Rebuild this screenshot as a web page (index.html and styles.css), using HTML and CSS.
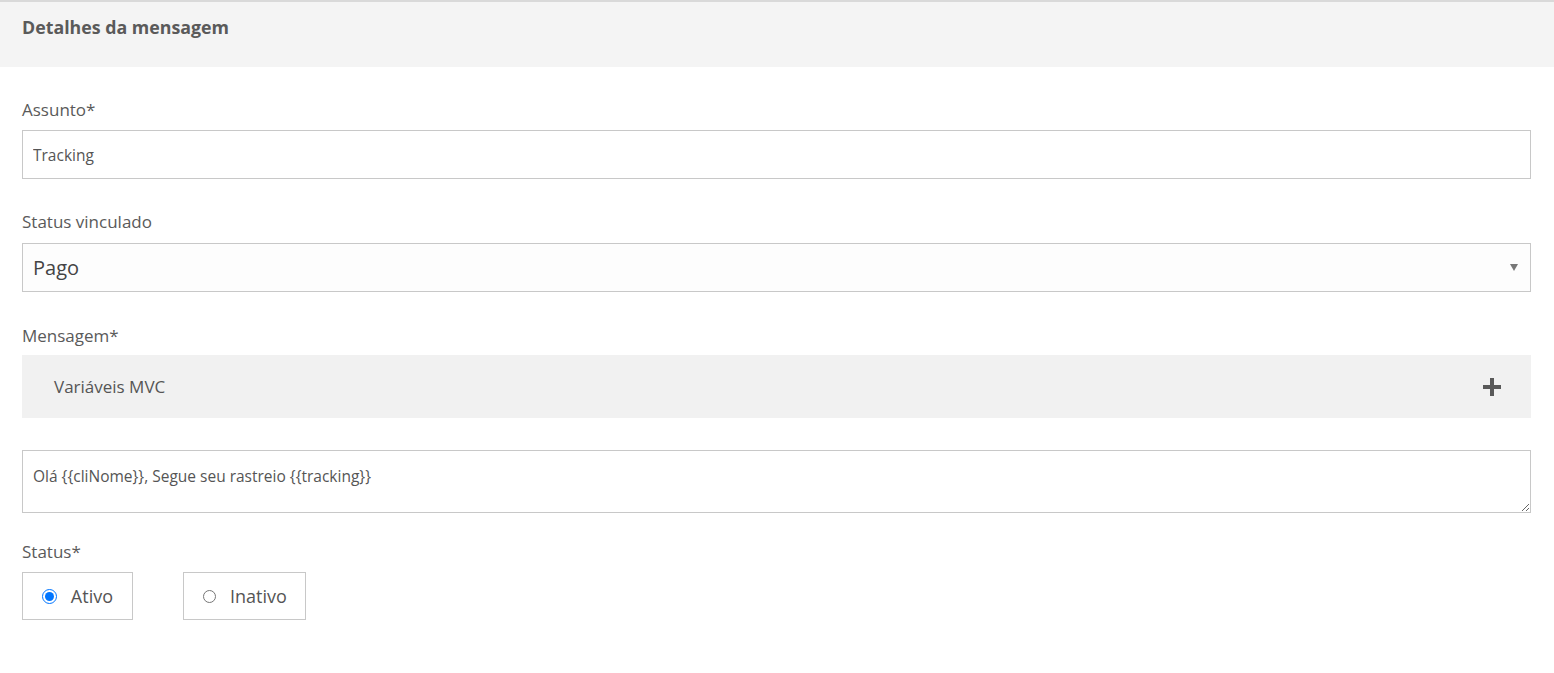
FILE: index.html
```html
<!DOCTYPE html>
<html lang="pt">
<head>
<meta charset="utf-8">
<title>Detalhes da mensagem</title>
<link rel="stylesheet" href="styles.css">
</head>
<body>
<div class="panel">
  <div class="panel-header">Detalhes da mensagem</div>
  <div class="panel-body">
    <div class="group g-subject">
      <label class="label">Assunto*</label>
      <input class="field" type="text" value="Tracking">
    </div>
    <div class="group g-status-link">
      <label class="label">Status vinculado</label>
      <div class="select">
        <span class="select-value">Pago</span>
        <span class="select-arrow"></span>
      </div>
    </div>
    <div class="group g-message">
      <label class="label label-msg">Mensagem*</label>
      <div class="accordion">
        <span class="accordion-title">Variáveis MVC</span>
        <svg class="plus" width="18" height="18" viewBox="0 0 18 18"><rect x="0" y="7" width="18" height="4" fill="#595959"/><rect x="7" y="0" width="4" height="18" fill="#595959"/></svg>
      </div>
      <textarea class="textarea">Olá {{cliNome}}, Segue seu rastreio {{tracking}}</textarea>
    </div>
    <div class="group g-status">
      <label class="label">Status*</label>
      <div class="radios">
        <label class="radio-box radio-ativo"><input type="radio" name="st" checked><span>Ativo</span></label>
        <label class="radio-box radio-inativo"><input type="radio" name="st"><span>Inativo</span></label>
      </div>
    </div>
  </div>
</div>
</body>
</html>
```
FILE: styles.css
```css
* { box-sizing: border-box; }
html, body { margin: 0; padding: 0; background: #fff; }
body { font-family: "Open Sans", "Noto Sans", sans-serif; color: #555; }

.panel { width: 1554px; }
.panel-header {
  border-top: 2px solid #d9d9d9;
  background: #f4f4f4;
  height: 67px;
  padding: 15px 22px 0;
  font-size: 17.8px;
  font-weight: 700;
  line-height: 20px;
  color: #5a5a5a;
}
.panel-body { padding: 33px 23px 0 22px; }

.label {
  display: block;
  font-size: 17px;
  line-height: 20px;
  color: #5a5a5a;
  margin-bottom: 10px;
}
.group { margin-bottom: 33px; }
.g-subject { margin-bottom: 33px; }
.g-status-link .label { margin-bottom: 11px; }
.g-status-link { margin-bottom: 34px; }
.g-message { margin-bottom: 29px; }
.label-msg { margin-bottom: 9px; }

.field {
  display: block;
  width: 100%;
  height: 49px;
  border: 1px solid #c8c8c8;
  padding: 0 10px;
  font-family: inherit;
  font-size: 15.5px;
  color: #555;
  background: #fff;
  outline: none;
  margin: 0;
}

.select {
  display: flex;
  align-items: center;
  justify-content: space-between;
  height: 49px;
  border: 1px solid #c8c8c8;
  background: #fdfdfd;
  padding: 0 12px 0 10px;
}
.select-value { font-size: 20px; color: #444; }
.select-arrow {
  width: 0; height: 0;
  border-left: 4px solid transparent;
  border-right: 4px solid transparent;
  border-top: 7px solid #777;
}

.accordion {
  display: flex;
  align-items: center;
  justify-content: space-between;
  height: 63px;
  background: #f1f1f1;
  padding: 0 30px 0 32px;
  margin-bottom: 32px;
}
.accordion-title { font-size: 17px; color: #555; }
.plus { display: block; }

.textarea {
  display: block;
  width: 100%;
  height: 63px;
  border: 1px solid #c8c8c8;
  padding: 14px 10px;
  font-family: inherit;
  font-size: 15.5px;
  color: #555;
  resize: vertical;
  margin: 0;
  outline: none;
}

.radios { display: flex; gap: 50px; }
.radio-box {
  display: flex;
  align-items: center;
  height: 48px;
  border: 1px solid #c8c8c8;
  padding: 0 19px 0 19px;
  font-size: 18px;
  color: #555;
}
.radio-box input { margin: 0 14px 0 0; width: 15px; height: 15px; }
.radio-ativo { width: 111px; }
.radio-inativo { width: 123px; }
```
